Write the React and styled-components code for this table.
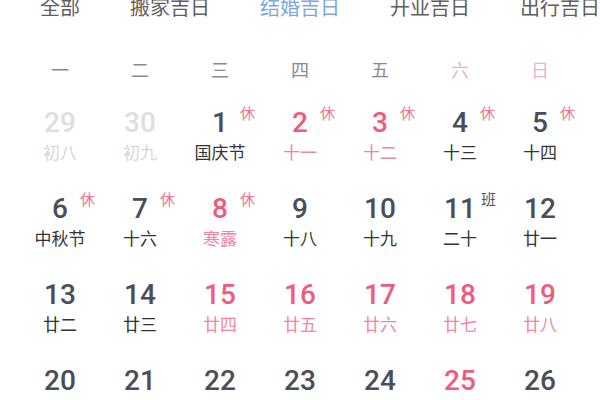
import React from "react";
import styled, { createGlobalStyle } from "styled-components";

const GlobalStyle = createGlobalStyle`
  html, body {
    margin: 0;
    padding: 0;
    background: #ffffff;
    overflow: hidden;
  }
  body {
    font-family: "Noto Sans CJK SC", "Noto Sans", sans-serif;
  }
`;

const tabs = ["全部", "搬家吉日", "结婚吉日", "开业吉日", "出行吉日"];
const weekdays = ["一", "二", "三", "四", "五", "六", "日"];

// tone: dim = 上月, pink = 红色日期
const days = [
  { n: 29, l: "初八", tone: "dim" },
  { n: 30, l: "初九", tone: "dim" },
  { n: 1, l: "国庆节", badge: "休" },
  { n: 2, l: "十一", tone: "pink", badge: "休" },
  { n: 3, l: "十二", tone: "pink", badge: "休" },
  { n: 4, l: "十三", badge: "休" },
  { n: 5, l: "十四", badge: "休" },
  { n: 6, l: "中秋节", badge: "休" },
  { n: 7, l: "十六", badge: "休" },
  { n: 8, l: "寒露", tone: "pink", badge: "休" },
  { n: 9, l: "十八" },
  { n: 10, l: "十九" },
  { n: 11, l: "二十", badge: "班" },
  { n: 12, l: "廿一" },
  { n: 13, l: "廿二" },
  { n: 14, l: "廿三" },
  { n: 15, l: "廿四", tone: "pink" },
  { n: 16, l: "廿五", tone: "pink" },
  { n: 17, l: "廿六", tone: "pink" },
  { n: 18, l: "廿七", tone: "pink" },
  { n: 19, l: "廿八", tone: "pink" },
  { n: 20, l: "廿九" },
  { n: 21, l: "九月" },
  { n: 22, l: "初二" },
  { n: 23, l: "霜降" },
  { n: 24, l: "初四" },
  { n: 25, l: "初五", tone: "pink" },
  { n: 26, l: "初六" },
];

const numColor = { dim: "#dedee2", pink: "#ef5b80", normal: "#4a4e5b" };
const lunarColor = { dim: "#d6d6da", pink: "#f286a2", normal: "#333438" };

const App = () => {
  return (
    <Page>
      <GlobalStyle />
      <TabBar>
        {tabs.map((t) => (
          <Tab key={t} $active={t === "结婚吉日"}>
            {t}
          </Tab>
        ))}
      </TabBar>
      <WeekRow>
        {weekdays.map((w, i) => (
          <Weekday key={w} $weekend={i >= 5}>
            {w}
          </Weekday>
        ))}
      </WeekRow>
      <DayGrid>
        {days.map((d) => {
          const tone = d.tone || "normal";
          return (
            <Cell key={`${tone}-${d.n}`}>
              <Num $tone={tone}>
                {d.n}
                {d.badge && (
                  <Badge $work={d.badge === "班"} $gap={d.n >= 10 ? 5 : 12}>
                    {d.badge}
                  </Badge>
                )}
              </Num>
              <Lunar $tone={tone}>{d.l}</Lunar>
            </Cell>
          );
        })}
      </DayGrid>
    </Page>
  );
};

const Page = styled.div`
  width: 600px;
  height: 400px;
  overflow: hidden;
`;

const TabBar = styled.div`
  display: flex;
  gap: 50px;
  padding-left: 40px;
  margin-top: -3px;
  height: 20px;
  white-space: nowrap;
`;

const Tab = styled.div`
  font-size: 20px;
  line-height: 20px;
  color: ${(p) => (p.$active ? "#7fa7de" : "#5e5e62")};
`;

const WeekRow = styled.div`
  display: grid;
  grid-template-columns: repeat(7, 80px);
  padding: 0 20px;
  margin-top: 37px;
`;

const Weekday = styled.div`
  text-align: center;
  font-size: 18px;
  line-height: 30px;
  color: ${(p) => (p.$weekend ? "#f0b3c3" : "#8a8a8e")};
`;

const DayGrid = styled.div`
  display: grid;
  grid-template-columns: repeat(7, 80px);
  grid-auto-rows: 86px;
  padding: 0 20px;
  margin-top: 14px;
`;

const Cell = styled.div`
  display: flex;
  flex-direction: column;
  align-items: center;
  padding-top: 10px;
`;

const Num = styled.div`
  position: relative;
  font-family: Roboto, "Noto Sans", sans-serif;
  font-weight: 500;
  font-size: 28px;
  line-height: 30px;
  color: ${(p) => numColor[p.$tone]};
`;

const Badge = styled.span`
  position: absolute;
  top: -3px;
  left: calc(100% + ${(p) => p.$gap}px);
  font-family: "Noto Sans CJK SC", sans-serif;
  font-weight: 400;
  font-size: 15px;
  line-height: 15px;
  white-space: nowrap;
  color: ${(p) => (p.$work ? "#55575e" : "#f07596")};
`;

const Lunar = styled.div`
  margin-top: 3px;
  font-size: 17px;
  line-height: 22px;
  color: ${(p) => lunarColor[p.$tone]};
`;

export default App;
